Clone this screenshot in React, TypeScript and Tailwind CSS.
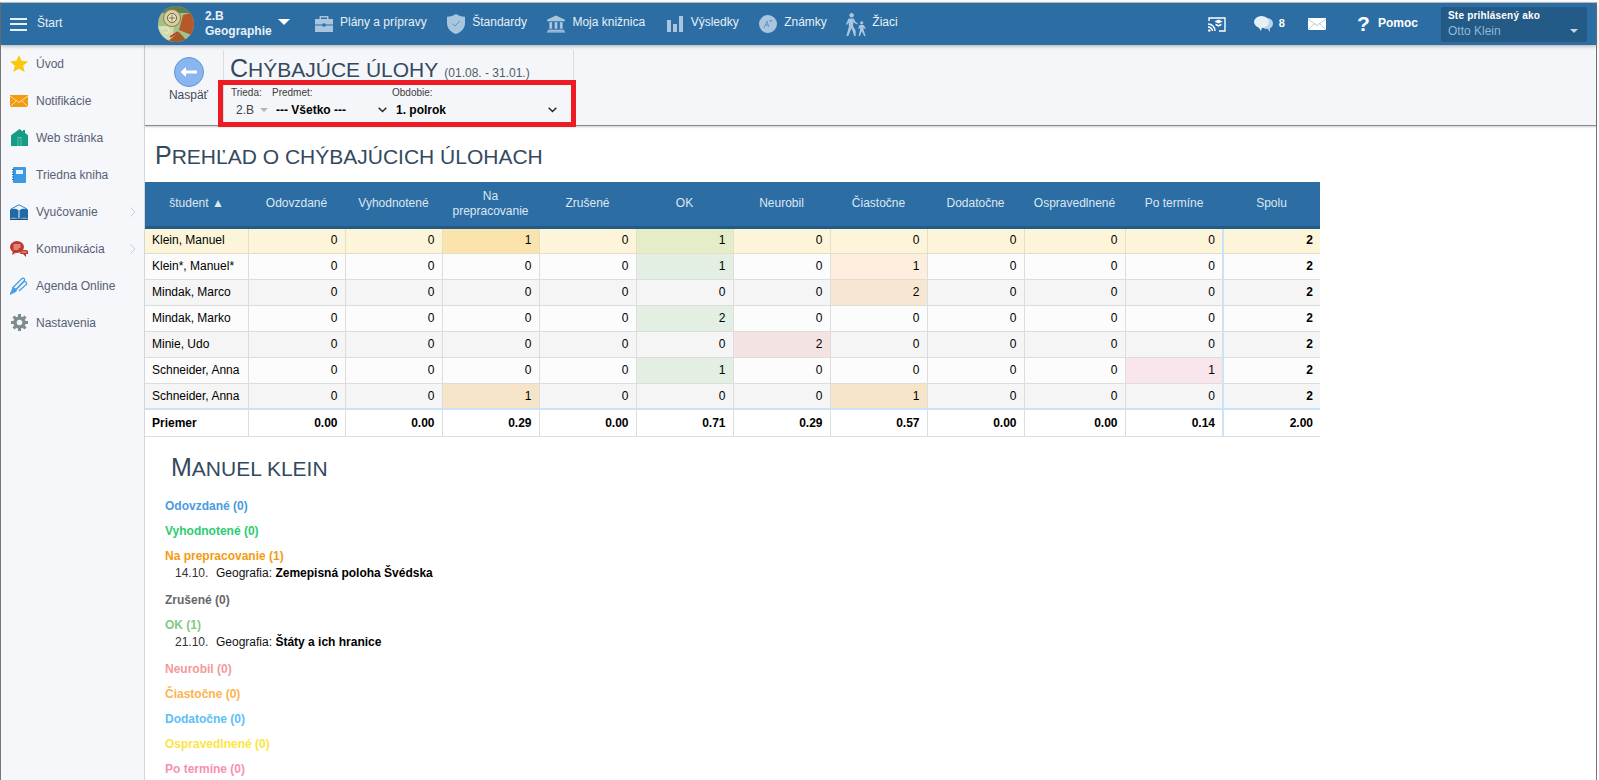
import React from "react";

const HBlue = "#a9c6df";

function Briefcase() {
  return (
    <svg width="18" height="16" viewBox="0 0 18 16" fill={HBlue}>
      <path d="M6 3V1.500h6V3h1.500V1A1 1 0 0 0 12.500 0h-7a1 1 0 0 0-1 1v2z" />
      <path d="M0 3h18v5.600H10.500V7.600h-3v1H0z" />
      <path d="M0 9.600h7.500v1h3v-1H18V16H0z" />
    </svg>
  );
}
function Shield() {
  return (
    <svg width="18" height="20" viewBox="0 0 18 20">
      <path d="M9 0c2.500 1.600 5.500 2.600 9 2.800V9c0 5-3.500 9-9 11C3.500 18 0 14 0 9V2.800C3.500 2.600 6.500 1.600 9 0z" fill={HBlue} />
      <path d="M5.500 9.500l2.500 2.500 5-5" fill="none" stroke="#5e92bd" strokeWidth="1" />
    </svg>
  );
}
function Bank() {
  return (
    <svg width="19" height="18" viewBox="0 0 19 18" fill={HBlue}>
      <path d="M9.500 0L19 4.500V6H0V4.500z" />
      <rect x="2.500" y="7" width="3" height="7" />
      <rect x="8" y="7" width="3" height="7" />
      <rect x="13.500" y="7" width="3" height="7" />
      <rect x="1" y="15" width="17" height="1.300" />
      <rect x="0" y="16.600" width="19" height="1.400" />
    </svg>
  );
}
function Bars() {
  return (
    <svg width="16" height="16" viewBox="0 0 16 16" fill={HBlue}>
      <rect x="0" y="4" width="4" height="12" />
      <rect x="6" y="8" width="4" height="8" />
      <rect x="12" y="0" width="4" height="16" />
    </svg>
  );
}
function Grade() {
  return (
    <svg width="18" height="18" viewBox="0 0 18 18">
      <circle cx="9" cy="9" r="9" fill={HBlue} />
      <path d="M5 13l3-7 1.500 6M6 10h4M11 7l1.500-1.500M10.500 5.500h3" fill="none" stroke="#5e92bd" strokeWidth="0.900" />
    </svg>
  );
}
function Walkers() {
  return (
    <svg width="22" height="23" viewBox="0 0 20 21" fill={HBlue} className="shrink-0">
      <circle cx="6" cy="2" r="2" />
      <path d="M3.200 5h4.600l2 3.400 1.800 1-.5 1-2.600-1.200-.8-1.200-.4 3.800 2.400 4.400V21H8.200L7 16.500 5.800 14 3 21H1.200l2.300-8.500-.3-4-1.200 2.300-1.200-.5z" />
      <circle cx="15.200" cy="9" r="1.500" />
      <path d="M13.300 11h3.800l1.900 3.200-.8.500-1.300-1.500v2.300l1.900 5.500h-1.300l-2.200-4.300-1.600 4.300h-1.300l1.300-6v-1.800l-1 1.300-.8-.5z" />
    </svg>
  );
}
function Cast() {
  return (
    <svg width="18" height="15" viewBox="0 0 18 15" fill="none" stroke="#fff">
      <path d="M1 4V1h16v13h-6" strokeWidth="1.400" />
      <path d="M0 7c4 0 7 3 7 7M0 10c2.500 0 4.500 2 4.500 4" strokeWidth="1.500" />
      <circle cx="1.300" cy="13.500" r="1.300" fill="#fff" stroke="none" />
      <path d="M10.500 2.500l4 2-4 2-4-2z" fill="#fff" stroke="none" />
      <path d="M7.500 6.500l3 1.500 3-1.500v1.700l-3 1.500-3-1.500z" fill="#fff" stroke="none" />
    </svg>
  );
}
function Chat() {
  return (
    <svg width="19" height="16" viewBox="0 0 19 16">
      <ellipse cx="13" cy="7.500" rx="6" ry="5.500" fill="#b9d3e8" />
      <path d="M13 12l3 4-.2-5z" fill="#b9d3e8" />
      <ellipse cx="7.500" cy="6" rx="7.500" ry="6" fill="#e6f0f8" />
      <path d="M4 10.500l3 4.500 1-4z" fill="#e6f0f8" />
    </svg>
  );
}
function Mail({ bg, line, w = 18, h = 12 }: { bg: string; line: string; w?: number; h?: number }) {
  return (
    <svg width={w} height={h} viewBox="0 0 18 12">
      <rect width="18" height="12" fill={bg} />
      <path d="M0 1l9 6.500L18 1M0 12l6.500-6.500M18 12l-6.500-6.500" fill="none" stroke={line} strokeWidth="0.800" />
    </svg>
  );
}
function Avatar() {
  return (
    <svg width="36" height="36" viewBox="0 0 36 36" className="shrink-0">
      <clipPath id="av"><circle cx="18" cy="18" r="18" /></clipPath>
      <g clipPath="url(#av)">
        <rect width="36" height="36" fill="#a6c08c" />
        <rect width="36" height="7" fill="#5f7f50" />
        <path d="M25 9L36 6V30L21 24z" fill="#b5582a" />
        <path d="M0 20h16l-2 16H0z" fill="#cfdcae" />
        <path d="M9 36l12-10 9 10z" fill="#a35a28" />
        <circle cx="14" cy="12" r="8.500" fill="#d8cfa4" stroke="#8d7a48" strokeWidth="1" />
        <circle cx="14" cy="12" r="4.500" fill="#eee6c8" stroke="#6b5a30" strokeWidth="1" />
        <path d="M14 9v6M11 12h6" stroke="#5a4420" strokeWidth="0.700" />
        <path d="M3 23c3-2 7-2 8 1s-4 4-5 2" fill="none" stroke="#f2eed0" strokeWidth="1" />
        <path d="M12 31l8-5" stroke="#c23a20" strokeWidth="1.500" />
      </g>
    </svg>
  );
}

function Star() {
  return (
    <svg width="18" height="17" viewBox="0 0 18 17"><path d="M9 0l2.600 5.800 6.400.7-4.800 4.200 1.400 6.300L9 13.700 3.400 17l1.400-6.300L0 6.500l6.400-.7z" fill="#fbc70f" /></svg>
  );
}
function Home() {
  return (
    <svg width="17" height="17" viewBox="0 0 17 17">
      <path d="M8.500 0L12 2.500V1h2v3l3 2.200V17H0V6.200z" fill="#169c83" />
      <rect x="6.500" y="8" width="4" height="9" fill="#5cc0ad" />
      <rect x="7.500" y="9" width="2" height="8" fill="#169c83" />
    </svg>
  );
}
function Notebook() {
  return (
    <svg width="14" height="16" viewBox="0 0 14 16">
      <rect x="1" width="13" height="16" rx="1" fill="#3b9ae1" />
      <rect x="4" y="3" width="7" height="4" fill="#e8f3fb" />
      <path d="M0 2.500h2M0 5h2M0 7.500h2M0 10h2M0 12.500h2" stroke="#1f6fae" strokeWidth="1" />
    </svg>
  );
}
function OpenBook() {
  return (
    <svg width="18" height="16" viewBox="0 0 18 16">
      <path d="M1 5L9 .8 17 5" fill="none" stroke="#2f80c4" strokeWidth="1" />
      <path d="M0 5.500c3-1 6-1 8.500 .8V15c-2.500-1.400-5.500-1.600-8.500-.7z" fill="#1f6aa8" />
      <path d="M18 5.500c-3-1-6-1-8.500 .8V15c2.500-1.400 5.500-1.600 8.500-.7z" fill="#1f6aa8" />
      <rect y="14.500" width="18" height="1.500" fill="#174f80" />
    </svg>
  );
}
function Bubbles() {
  return (
    <svg width="18" height="16" viewBox="0 0 18 16">
      <ellipse cx="7" cy="6" rx="7" ry="6" fill="#c0392b" />
      <path d="M3 10l-1 4 5-3z" fill="#c0392b" />
      <path d="M3.500 4h7M3.500 6h7M3.500 8h5" stroke="#f4d4cf" strokeWidth="1" />
      <path d="M11 9h5.500a1.500 1.500 0 0 1 1.500 1.500V13h-2v3l-3-3h-3z" fill="#c0392b" />
      <path d="M11.500 11h5" stroke="#f4d4cf" strokeWidth="0.800" />
    </svg>
  );
}
function Pen() {
  return (
    <svg width="19" height="18" viewBox="0 0 18 17" fill="none" stroke="#4a9ee0">
      <path d="M3 10L12 1c1.500-1 3 .5 2.500 2L6 12z" strokeWidth="1.300" />
      <path d="M6.500 11.500l7-7c1.800-1 3.500 .5 3 2.200L9 13.500" strokeWidth="1.300" />
      <path d="M3 10l-3 7 6-3 1-2" fill="#4a9ee0" strokeWidth="0.800" />
    </svg>
  );
}
function Gear() {
  return (
    <svg width="17" height="17" viewBox="0 0 17 17">
      <circle cx="8.500" cy="8.500" r="4.500" fill="none" stroke="#7f8c8d" strokeWidth="3.400" />
      <path d="M8.500 0v17M0 8.500h17M2.500 2.500l12 12M14.500 2.500l-12 12" stroke="#7f8c8d" strokeWidth="3" strokeDasharray="3 11" />
    </svg>
  );
}

const nav: [React.ReactNode, string][] = [
  [<Briefcase />, "Plány a prípravy"],
  [<Shield />, "Štandardy"],
  [<Bank />, "Moja knižnica"],
  [<Bars />, "Výsledky"],
  [<Grade />, "Známky"],
  [<Walkers />, "Žiaci"],
];

const side: [React.ReactNode, string, boolean][] = [
  [<Star />, "Úvod", false],
  [<Mail bg="#f39c12" line="#fdeccd" />, "Notifikácie", false],
  [<Home />, "Web stránka", false],
  [<Notebook />, "Triedna kniha", false],
  [<OpenBook />, "Vyučovanie", true],
  [<Bubbles />, "Komunikácia", true],
  [<Pen />, "Agenda Online", false],
  [<Gear />, "Nastavenia", false],
];

const heads = ["študent ▲", "Odovzdané", "Vyhodnotené", "Na prepracovanie", "Zrušené", "OK", "Neurobil", "Čiastočne", "Dodatočne", "Ospravedlnené", "Po termíne", "Spolu"];
const widths = [103, 97, 97, 97, 97, 97, 97, 97, 97, 101, 98, 97];

const rows: [string, number[], Record<number, string>][] = [
  ["Klein, Manuel", [0, 0, 1, 0, 1, 0, 0, 0, 0, 0, 2], { 2: "bg-[#fbe3ae]", 4: "bg-[#e5edc8]" }],
  ["Klein*, Manuel*", [0, 0, 0, 0, 1, 0, 1, 0, 0, 0, 2], { 4: "bg-[#e2efe2]", 6: "bg-[#fdeedd]" }],
  ["Mindak, Marco", [0, 0, 0, 0, 0, 0, 2, 0, 0, 0, 2], { 6: "bg-[#f7e7d2]" }],
  ["Mindak, Marko", [0, 0, 0, 0, 2, 0, 0, 0, 0, 0, 2], { 4: "bg-[#e2efe2]" }],
  ["Minie, Udo", [0, 0, 0, 0, 0, 2, 0, 0, 0, 0, 2], { 5: "bg-[#f3e3e3]" }],
  ["Schneider, Anna", [0, 0, 0, 0, 1, 0, 0, 0, 0, 1, 2], { 4: "bg-[#e2efe2]", 9: "bg-[#f9e5ec]" }],
  ["Schneider, Anna", [0, 0, 1, 0, 0, 0, 1, 0, 0, 0, 2], { 2: "bg-[#f6e4c8]", 6: "bg-[#f6e4c8]" }],
];
const avg = ["0.00", "0.00", "0.29", "0.00", "0.71", "0.29", "0.57", "0.00", "0.00", "0.14", "2.00"];

const groups: [string, string, [string, string][]][] = [
  ["Odovzdané (0)", "text-[#4a9be0]", []],
  ["Vyhodnotené (0)", "text-[#2ecc71]", []],
  ["Na prepracovanie (1)", "text-[#f39c12]", [["14.10.", "Zemepisná poloha Švédska"]]],
  ["Zrušené (0)", "text-[#666666]", []],
  ["OK (1)", "text-[#82c985]", [["21.10.", "Štáty a ich hranice"]]],
  ["Neurobil (0)", "text-[#f29a9a]", []],
  ["Čiastočne (0)", "text-[#fbb450]", []],
  ["Dodatočne (0)", "text-[#5bc0f8]", []],
  ["Ospravedlnené (0)", "text-[#fde541]", []],
  ["Po termíne (0)", "text-[#f78fb3]", []],
];

function Caps({ first, rest }: { first: string; rest: string }) {
  return (
    <>
      {first}
      <span className="text-[21px] uppercase">{rest}</span>
    </>
  );
}

export default function App() {
  return (
    <div className="h-screen w-[1599px] overflow-hidden bg-white pt-[2px] pr-[2px] font-['Liberation_Sans',Arial,sans-serif] text-[12px] text-black">
      <div className="flex h-full flex-col border-l border-r border-l-[#777777] border-r-[#777777] border-t border-t-[#c8c8c8]">
        {/* header */}
        <header className="relative z-20 flex h-[42px] shrink-0 items-center bg-[#2c6da4] text-white shadow-[0_1px_4px_rgba(0,0,0,0.3)]">
          <div className="flex w-[157px] shrink-0 items-center pl-[9px]">
            <div className="flex w-[17px] flex-col gap-[3.500px]">
              <span className="h-[2px] bg-[#e8f0f7]" />
              <span className="h-[2px] bg-[#e8f0f7]" />
              <span className="h-[2px] bg-[#e8f0f7]" />
            </div>
            <span className="ml-[10px] mb-[2px] text-[#e8f0f7]">Štart</span>
          </div>
          <Avatar />
          <div className="ml-[11px] w-[73px] font-bold leading-[15px] text-[#e8f0f7]">
            <div>2.B</div>
            <div>Geographie</div>
          </div>
          <span className="mb-[4px] h-0 w-0 border-x-[6px] border-t-[6px] border-x-transparent border-t-white" />
          <nav className="ml-[25px] flex items-center gap-[20.500px]">
            {nav.map(([icon, label]) => (
              <div key={label} className="flex items-center gap-[7px] text-[#e8f0f7]">
                <span className="flex w-[18px] justify-center">{icon}</span>
                <span className="mb-[4px]">{label}</span>
              </div>
            ))}
          </nav>
          <div className="ml-auto flex items-center">
            <Cast />
            <span className="ml-[28px]"><Chat /></span>
            <span className="ml-[6px] mb-[2px] font-bold text-[11px]">8</span>
            <span className="ml-[23px]"><Mail bg="#ffffff" line="#9fbfd9" /></span>
            <span className="ml-[31px] mb-[1px] w-[11px] text-[21px] font-bold leading-none">?</span>
            <span className="ml-[10px] mb-[2px] font-bold">Pomoc</span>
            <div className="ml-[23px] mr-[9px] flex h-[35px] w-[146px] flex-col justify-center rounded-[2px] border border-[#245a87] bg-[#235a86] pl-[6px] pr-[8px]">
              <div className="text-[10px] font-bold leading-[14px] tracking-[0.2px]">Ste prihlásený ako</div>
              <div className="flex items-center justify-between leading-[16px] text-[#8fb8dc]">
                <span className="text-[12px]">Otto Klein</span>
                <span className="h-0 w-0 border-x-[4px] border-t-[4px] border-x-transparent border-t-[#c5d6e4]" />
              </div>
            </div>
          </div>
        </header>

        <div className="flex min-h-0 flex-1">
          {/* sidebar */}
          <aside className="w-[144px] shrink-0 border-r border-r-[#d4d6da] bg-[#f5f7fa]">
            {side.map(([icon, label, more]) => (
              <div key={label} className="flex h-[37px] items-center text-[#566074]">
                <span className="ml-[9px] flex w-[18px] justify-center">{icon}</span>
                <span className="ml-[8px] flex-1">{label}</span>
                {more && (
                  <svg width="6" height="10" viewBox="0 0 6 10" className="mr-[8px]" fill="none" stroke="#c9ced6" strokeWidth="1">
                    <path d="M.5 .5L5 5 .5 9.500" />
                  </svg>
                )}
              </div>
            ))}
          </aside>

          <main className="min-w-0 flex-1">
            {/* top panel */}
            <div className="relative z-10 flex h-[81px] border-b border-b-[#8a8a8a] bg-[#f5f6f9] shadow-[0_1px_2px_rgba(0,0,0,0.2)]">
              <div className="flex w-[78px] shrink-0 flex-col items-center pt-[12px] pl-[9px]">
                <svg width="30" height="30" viewBox="0 0 30 30">
                  <circle cx="15" cy="15" r="14.500" fill="#8ab6f0" stroke="#5e93d6" />
                  <path d="M23 13.500H12V10l-5.500 5 5.500 5v-3.500h11z" fill="#fff" />
                </svg>
                <span className="-mt-[1px] text-[12px] text-[#3f4a5a]">Naspäť</span>
              </div>
              <div className="mt-[5px] w-[351px] shrink-0 border-x border-x-[#dcdde0] pl-[6px]">
                <div className="mt-[4px] flex items-baseline">
                  <h1 className="text-[25px] font-normal leading-[28px] text-[#34495e]"><Caps first="C" rest="hýbajúce úlohy" /></h1>
                  <span className="ml-[6px] text-[12px] text-[#4f5b6b]">(01.08. - 31.01.)</span>
                </div>
                <div className="mt-[3px] flex pl-[1px] text-[#3c3c3c]">
                  <div className="w-[41px] text-[10px] leading-[12px]">
                    Trieda:
                    <div className="mt-[5px] flex items-center pl-[5px] text-[12px] text-[#444444]">
                      2.B
                      <span className="ml-[6px] h-0 w-0 border-x-[4px] border-t-[4px] border-x-transparent border-t-[#b5b5b5]" />
                    </div>
                  </div>
                  <div className="w-[120px] text-[10px] leading-[12px]">
                    Predmet:
                    <div className="mt-[5px] flex items-center justify-between pl-[4px] pr-[5px] text-[12px] font-bold text-black">
                      --- Všetko ---
                      <svg width="9" height="6" viewBox="0 0 9 6" fill="none" stroke="#222" strokeWidth="1.400"><path d="M.7 .8L4.500 4.600 8.300 .8" /></svg>
                    </div>
                  </div>
                  <div className="w-[170px] text-[10px] leading-[12px]">
                    Obdobie:
                    <div className="mt-[5px] flex items-center justify-between pl-[4px] pr-[5px] text-[12px] font-bold text-black">
                      1. polrok
                      <svg width="9" height="6" viewBox="0 0 9 6" fill="none" stroke="#222" strokeWidth="1.400"><path d="M.7 .8L4.500 4.600 8.300 .8" /></svg>
                    </div>
                  </div>
                </div>
              </div>
              <div className="absolute left-[73px] top-[35px] h-[47px] w-[358px] border-[5px] border-[#ed1c24]" />
            </div>

            {/* content */}
            <h2 className="h-[56px] pl-[10px] pt-[15px] text-[25px] font-normal leading-[28px] text-[#34495e]"><Caps first="P" rest="rehľad o chýbajúcich úlohach" /></h2>

            <table className="w-[1175px] table-fixed border-collapse text-[12px]">
              <colgroup>
                {widths.map((w, i) => (
                  <col key={i} style={{ width: w }} />
                ))}
              </colgroup>
              <thead>
                <tr className="h-[45px] border-b-[3px] border-b-[#235a86] bg-[#2c6da4]">
                  {heads.map((h) => (
                    <th key={h} className="px-[8px] text-center text-[12px] font-normal leading-[15px] text-[#dce8f2]">{h}</th>
                  ))}
                </tr>
              </thead>
              <tbody>
                {rows.map(([name, vals, hl], r) => {
                  const base = r === 0 ? "bg-[#fdf5d9]" : r % 2 === 1 ? "bg-[#fcfcfc]" : "bg-[#f5f5f5]";
                  const line = r === 0 ? "border-[#e6dfc8]" : "border-[#dddddd]";
                  const nudge = r === 0 ? "pb-[2px]" : "";
                  return (
                    <tr key={r} className="h-[26px]">
                      <td className={`${base} border-b ${line} ${nudge} pl-[7px]`}>{name}</td>
                      {vals.map((v, c) => (
                        <td
                          key={c}
                          className={`${hl[c] ?? base} border-b ${line} ${nudge} ${c === 10 ? "border-l-2 border-l-[#c9e4fa] font-bold" : "border-l"} pr-[7px] text-right`}
                        >
                          {v}
                        </td>
                      ))}
                    </tr>
                  );
                })}
                <tr className="h-[27px] border-t-2 border-t-[#c9e4fa] font-bold">
                  <td className="border-b border-[#dddddd] pl-[7px]">Priemer</td>
                  {avg.map((v, c) => (
                    <td key={c} className={`border-b border-[#dddddd] ${c === 10 ? "border-l-2 border-l-[#c9e4fa]" : "border-l"} pr-[7px] text-right`}>{v}</td>
                  ))}
                </tr>
              </tbody>
            </table>

            <h2 className="h-[57px] pl-[26px] pt-[16px] text-[25px] font-normal leading-[28px] text-[#34495e]"><Caps first="M" rest="anuel klein" /></h2>

            <div className="pl-[20px]">
              {groups.map(([label, color, subs]) => (
                <div key={label}>
                  <div className={`flex h-[25px] items-center font-bold ${color}`}>{label}</div>
                  {subs.map(([date, title]) => (
                    <div key={date} className="flex h-[19px] pl-[10px] leading-[8px] text-[#111111]">
                      <span className="w-[41px] text-[#333333]">{date}</span>
                      <span>Geografia: <b className="text-black">{title}</b></span>
                    </div>
                  ))}
                </div>
              ))}
            </div>
          </main>
        </div>
      </div>
    </div>
  );
}
